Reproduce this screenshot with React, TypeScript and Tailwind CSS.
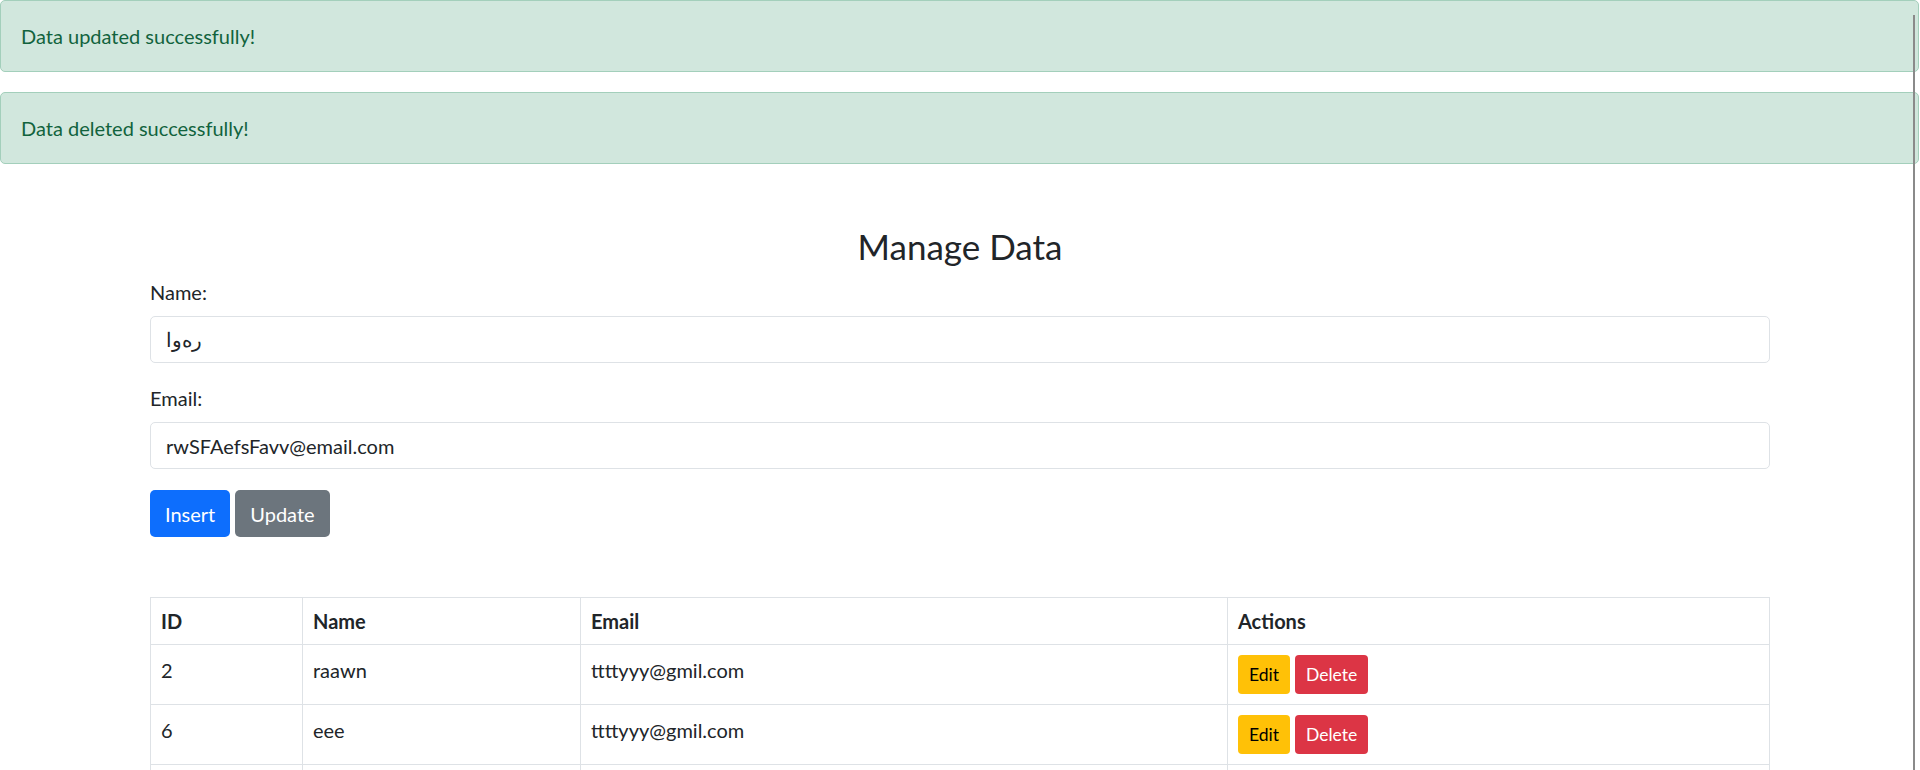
export default function App() {
  const rows = [
    { id: 2, name: "raawn", email: "ttttyyy@gmil.com" },
    { id: 6, name: "eee", email: "ttttyyy@gmil.com" },
  ];

  return (
    <div className="relative h-screen overflow-hidden bg-white font-['Lato',sans-serif] text-[20px] leading-[30px] text-[#212529]">
      <div className="mr-[1px] mb-5 rounded-[5px] border border-[#a3cfbb] bg-[#d1e7dd] p-5 text-[#11633d]">
        Data updated successfully!
      </div>
      <div className="mr-[1px] mb-5 rounded-[5px] border border-[#a3cfbb] bg-[#d1e7dd] p-5 text-[#11633d]">
        Data deleted successfully!
      </div>

      <div className="mx-auto w-[1620px] pt-[41px]">
        <h2 className="mb-[10px] text-center text-[35px] leading-[42px] font-normal">Manage Data</h2>

        <form className="flex flex-col">
          <div className="mb-5">
            <label className="mb-[9px] block">Name:</label>
            <input
              type="text"
              defaultValue="رەوا"
              className="h-[47px] w-full rounded-[5px] border border-[#dee2e6] px-[15px] outline-none"
            />
          </div>
          <div className="mb-[21px]">
            <label className="mb-[9px] block">Email:</label>
            <input
              type="email"
              defaultValue="rwSFAefsFavv@email.com"
              className="h-[47px] w-full rounded-[5px] border border-[#dee2e6] px-[15px] outline-none"
            />
          </div>
          <div className="flex gap-[5px]">
            <button type="button" className="h-[47px] rounded-[5px] bg-[#0d6efd] px-[15px] text-white">
              Insert
            </button>
            <button type="button" className="h-[47px] rounded-[5px] bg-[#6c757d] px-[15px] text-white">
              Update
            </button>
          </div>
        </form>

        <table className="mt-[60px] w-full border-collapse border border-[#dee2e6] text-left">
          <thead>
            <tr>
              <th className="w-[152px] border border-[#dee2e6] px-[10px] py-[8px] font-bold">ID</th>
              <th className="w-[278px] border border-[#dee2e6] px-[10px] py-[8px] font-bold">Name</th>
              <th className="w-[647px] border border-[#dee2e6] px-[10px] py-[8px] font-bold">Email</th>
              <th className="border border-[#dee2e6] px-[10px] py-[8px] font-bold">Actions</th>
            </tr>
          </thead>
          <tbody>
            {rows.map((r) => (
              <tr key={r.id}>
                <td className="border border-[#dee2e6] p-[10px] align-top">{r.id}</td>
                <td className="border border-[#dee2e6] p-[10px] align-top">{r.name}</td>
                <td className="border border-[#dee2e6] p-[10px] align-top">{r.email}</td>
                <td className="border border-[#dee2e6] p-[10px] align-top">
                  <div className="flex gap-[5px]">
                    <button type="button" className="h-[39px] rounded-[4px] bg-[#ffc107] px-[11px] text-[17.5px] text-black">
                      Edit
                    </button>
                    <button type="button" className="h-[39px] rounded-[4px] bg-[#dc3545] px-[11px] text-[17.5px] text-white">
                      Delete
                    </button>
                  </div>
                </td>
              </tr>
            ))}
            {/* next row, below the fold */}
            <tr className="h-[59px]">
              <td className="border border-[#dee2e6]" />
              <td className="border border-[#dee2e6]" />
              <td className="border border-[#dee2e6]" />
              <td className="border border-[#dee2e6]" />
            </tr>
          </tbody>
        </table>
      </div>

      {/* window edge line */}
      <div className="absolute top-[15px] right-[5px] bottom-0 w-[2px] bg-[#8a8a8a]" />
    </div>
  );
}
